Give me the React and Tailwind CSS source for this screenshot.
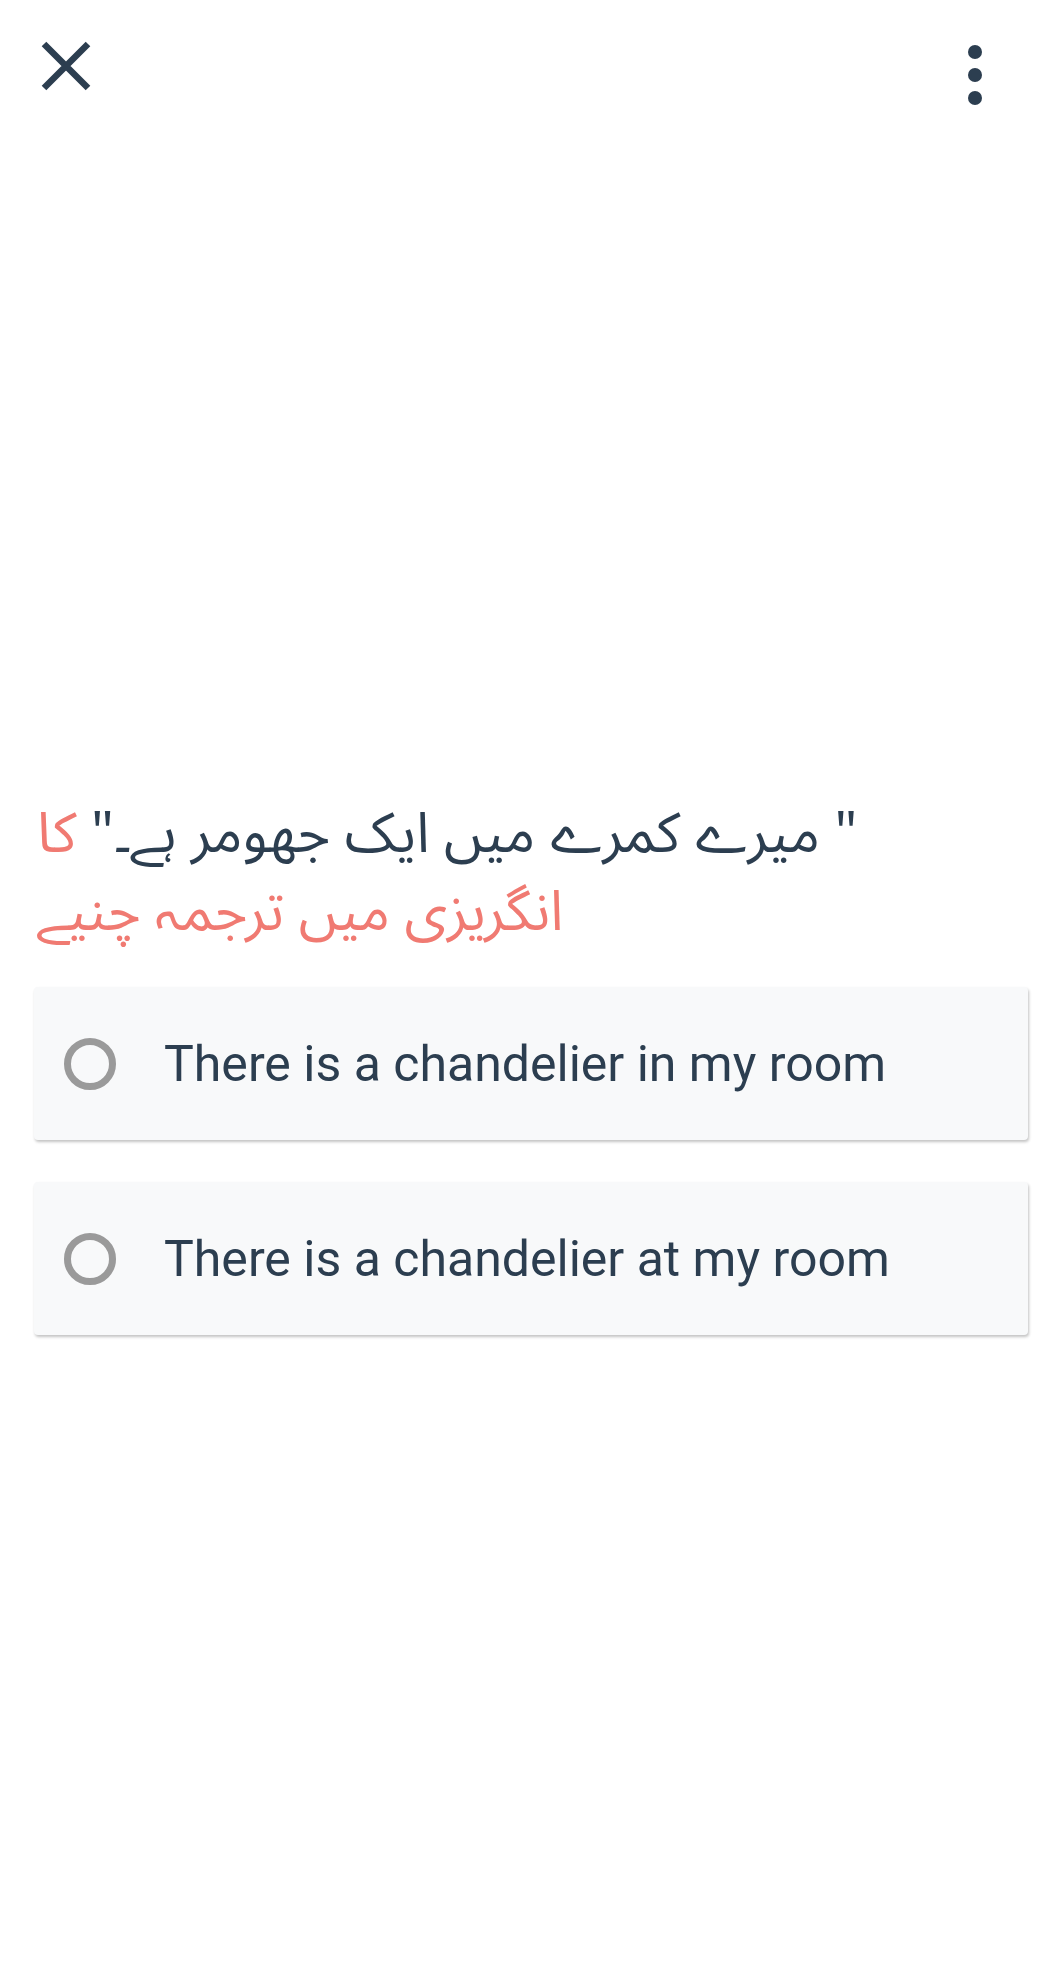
import React from "react";

function Option({ text }) {
  return (
    <div className="flex h-[153px] items-center rounded-[4px] bg-[#f8f9fa] pl-[30px] shadow-[1px_2px_3px_rgba(0,0,0,0.24)]">
      <div className="h-[52px] w-[52px] shrink-0 rounded-full border-[7px] border-[#9a9a9a]" />
      <div
        className="ml-[48px] text-[50px] leading-none text-[#2c3e50]"
        style={{ fontFamily: "Roboto, 'Liberation Sans', sans-serif" }}
      >
        {text}
      </div>
    </div>
  );
}

export default function App() {
  return (
    <div className="min-h-[1980px] w-[1056px] bg-white">
      <div className="flex items-start justify-between pl-[40px] pr-[74px] pt-[40px]">
        <svg width="52" height="52" viewBox="0 0 52 52" className="block">
          <path d="M4 4 L48 48 M48 4 L4 48" stroke="#2c3e50" strokeWidth="6.5" strokeLinecap="butt" />
        </svg>
        <div className="flex flex-col items-center gap-[9px] pt-[5px]">
          <div className="h-[14px] w-[14px] rounded-full bg-[#2c3e50]" />
          <div className="h-[14px] w-[14px] rounded-full bg-[#2c3e50]" />
          <div className="h-[14px] w-[14px] rounded-full bg-[#2c3e50]" />
        </div>
      </div>

      <div
        dir="rtl"
        className="mt-[690px] pl-[37px] pr-[40px] text-left text-[56px] leading-[78px]"
        style={{ fontFamily: "'Noto Sans Arabic', 'Noto Naskh Arabic', 'DejaVu Sans', sans-serif" }}
      >
        <span className="text-[#2c3e50]">" میرے کمرے میں ایک جھومر ہے۔"</span>
        <span className="text-[#f07a72]"> کا</span>
        <br />
        <span className="text-[#f07a72]">انگریزی میں ترجمہ چنیے</span>
      </div>

      <div className="ml-[34px] mr-[28px] mt-[36px] flex flex-col gap-[42px]">
        <Option text="There is a chandelier in my room" />
        <Option text="There is a chandelier at my room" />
      </div>
    </div>
  );
}
